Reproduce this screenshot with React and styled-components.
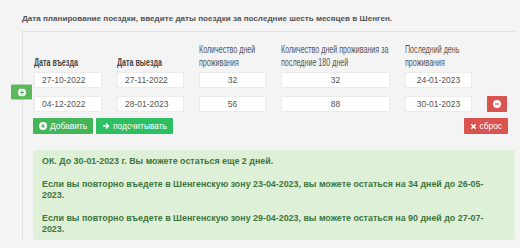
import styled, { createGlobalStyle } from "styled-components";

const GlobalStyle = createGlobalStyle`
  html, body {
    margin: 0;
    background: #f4f4f4;
    font-family: "Liberation Sans", Arial, sans-serif;
  }
`;

const COLUMNS = "68px 67px 67px 109px 67px 20px";
const HEAD_SCALE = 0.66;

const PlusCircle = ({ color }) => (
  <svg width="8" height="8" viewBox="0 0 16 16">
    <circle cx="8" cy="8" r="8" fill="#fff" />
    <path d="M8 4v8M4 8h8" stroke={color} strokeWidth="2.4" />
  </svg>
);

const MinusCircle = ({ color }) => (
  <svg width="8" height="8" viewBox="0 0 16 16">
    <circle cx="8" cy="8" r="8" fill="#fff" />
    <path d="M4 8h8" stroke={color} strokeWidth="2.4" />
  </svg>
);

const ArrowRight = () => (
  <svg width="8" height="8" viewBox="0 0 16 16">
    <path d="M2 8h10M8 3l5 5-5 5" stroke="#fff" strokeWidth="3" fill="none" />
  </svg>
);

const Times = () => (
  <svg width="7" height="7" viewBox="0 0 16 16">
    <path d="M3 3l10 10M13 3L3 13" stroke="#fff" strokeWidth="3.6" />
  </svg>
);

const headers = [
  ["Дата въезда", true],
  ["Дата выезда", true],
  ["Количество дней проживания", false],
  ["Количество дней проживания за последние 180 дней", false],
  ["Последний день проживания", false],
];

const rows = [
  ["27-10-2022", "27-11-2022", "32", "32", "24-01-2023"],
  ["04-12-2022", "28-01-2023", "56", "88", "30-01-2023"],
];

const App = () => {
  return (
    <>
      <GlobalStyle />
      <Page>
        <Title>Дата планирование поездки, введите даты поездки за последние шесть месяцев в Шенген.</Title>
        <Panel>
          <HeaderRow>
            {headers.map(([text, strong]) => (
              <HeadCell key={text}>
                <HeadText $strong={strong}>{text}</HeadText>
              </HeadCell>
            ))}
          </HeaderRow>
          <RowsWrap>
            <SideButton $color="#5cb85c">
              <PlusCircle color="#5cb85c" />
            </SideButton>
            {rows.map((row, i) => (
              <InputRow key={i}>
                {row.map((v, j) => (
                  <Field key={j} defaultValue={v} readOnly $center={j >= 2} />
                ))}
                {i === rows.length - 1 ? (
                  <IconButton $color="#d9534f">
                    <MinusCircle color="#d9534f" />
                  </IconButton>
                ) : (
                  <span />
                )}
              </InputRow>
            ))}
          </RowsWrap>
          <Actions>
            <ButtonGroup>
              <Button $color="#45b55a">
                <PlusCircle color="#45b55a" /> Добавить
              </Button>
              <Button $color="#2ebf64">
                <ArrowRight /> подсчитывать
              </Button>
            </ButtonGroup>
            <Button $color="#d9534f">
              <Times /> сброс
            </Button>
          </Actions>
          <Alert>
            <p>ОК. До 30-01-2023 г. Вы можете остаться еще 2 дней.</p>
            <p>Если вы повторно въедете в Шенгенскую зону 23-04-2023, вы можете остаться на 34 дней до 26-05-<wbr />2023.</p>
            <p>Если вы повторно въедете в Шенгенскую зону 29-04-2023, вы можете остаться на 90 дней до 27-07-<wbr />2023.</p>
          </Alert>
        </Panel>
      </Page>
    </>
  );
};

export default App;

const Page = styled.div`
  padding: 14px 5px 10px 22px;
  height: 248px;
  box-sizing: border-box;
  overflow: hidden;
`;

const Title = styled.h1`
  margin: 0 0 7px;
  font-size: 8.1px;
  line-height: 10px;
  font-weight: bold;
  color: #555;
`;

const Panel = styled.div`
  border-top: 1px solid #e2e2e2;
  border-left: 1px solid #e2e2e2;
  padding: 11px 0 0 11px;
`;

const HeaderRow = styled.div`
  display: grid;
  grid-template-columns: ${COLUMNS};
  column-gap: 15px;
  align-items: end;
  margin-bottom: 4px;
`;

const HeadCell = styled.div`
  min-width: 0;
`;

/* narrow, Oswald-like column titles */
const HeadText = styled.div`
  width: calc(100% / ${HEAD_SCALE});
  transform: scaleX(${HEAD_SCALE});
  transform-origin: left bottom;
  font-family: "Liberation Sans", Arial, sans-serif;
  font-size: 10.8px;
  line-height: 12.5px;
  font-weight: ${(p) => (p.$strong ? "bold" : "normal")};
  color: ${(p) => (p.$strong ? "#444" : "#555")};
`;

const RowsWrap = styled.div`
  position: relative;
  display: flex;
  flex-direction: column;
  gap: 8px;
`;

const InputRow = styled.div`
  display: grid;
  grid-template-columns: ${COLUMNS};
  column-gap: 15px;
  align-items: center;
`;

const Field = styled.input`
  box-sizing: border-box;
  width: 100%;
  height: 16px;
  margin: 0;
  padding: 0 7px;
  border: 1px solid #ececec;
  background: #fff;
  font-family: "Liberation Sans", Arial, sans-serif;
  font-size: 8.5px;
  color: #555;
  text-align: ${(p) => (p.$center ? "center" : "left")};
  outline: none;
`;

const IconButton = styled.button`
  display: flex;
  align-items: center;
  justify-content: center;
  width: 20px;
  height: 16px;
  padding: 0;
  border: none;
  border-radius: 1px;
  background: ${(p) => p.$color};
`;

const SideButton = styled(IconButton)`
  position: absolute;
  left: -23px;
  top: 50%;
  transform: translateY(-50%);
  width: 21px;
  height: 15px;
`;

const Actions = styled.div`
  display: flex;
  justify-content: space-between;
  align-items: center;
  margin: 6px 7px 0 -1px;
`;

const ButtonGroup = styled.div`
  display: flex;
  gap: 3px;
`;

const Button = styled.button`
  display: flex;
  align-items: center;
  gap: 3px;
  height: 16px;
  padding: 0 6px;
  border: none;
  border-radius: 1px;
  background: ${(p) => p.$color};
  color: #fff;
  font-family: "Liberation Sans", Arial, sans-serif;
  font-size: 8.4px;
`;

const Alert = styled.div`
  margin: 16px 0 0 -1px;
  padding: 6px 15px 4px 9px;
  background: #dff0d8;
  border-radius: 3px;
  color: #3c763d;
  font-size: 8.9px;
  line-height: 11.5px;
  font-weight: bold;

  p {
    margin: 0 0 11px;
  }
  p:last-child {
    margin-bottom: 0;
  }
`;
